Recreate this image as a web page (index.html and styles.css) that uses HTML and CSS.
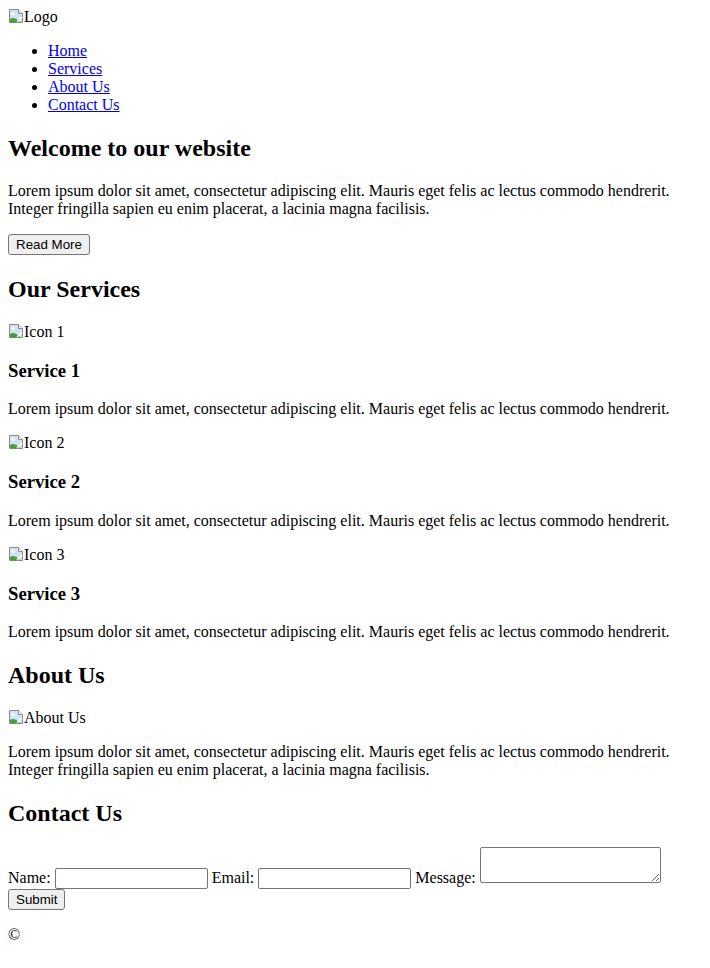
FILE: index.html
```html
<!DOCTYPE html>
<html lang="en">
<head>
<meta charset="utf-8">
<title>Website</title>
<link rel="stylesheet" href="styles.css">
</head>
<body>
<header class="site-header">
  <span class="broken-img"><svg class="broken-icon" width="16" height="16" viewBox="0 0 16 16"><path d="M1.5 1.5h9l4 4v9h-13z" fill="#cfe3f5" stroke="#8a8a8a"/><path d="M10.5 1.5v4h4" fill="#fff" stroke="#8a8a8a"/><path d="M2 14.5 L2 11 Q6 8 11 13 L12.5 14.5 Z" fill="#4a9c3a"/><circle cx="5" cy="5.5" r="1.6" fill="#fff"/><path d="M9 14 L14 9" stroke="#fff" stroke-width="1.5"/></svg>Logo</span>
  <nav class="main-nav">
    <ul class="nav-list">
      <li><a href="#">Home</a></li>
      <li><a href="#">Services</a></li>
      <li><a href="#">About Us</a></li>
      <li><a href="#">Contact Us</a></li>
    </ul>
  </nav>
</header>
<section class="hero">
  <h1 class="title">Welcome to our website</h1>
  <p class="text">Lorem ipsum dolor sit amet, consectetur adipiscing elit. Mauris eget felis ac lectus commodo hendrerit. Integer fringilla sapien eu enim placerat, a lacinia magna facilisis.</p>
  <button class="btn">Read More</button>
</section>
<section class="services">
  <h2 class="heading">Our Services</h2>
  <div class="service">
    <span class="broken-img"><svg class="broken-icon" width="16" height="16" viewBox="0 0 16 16"><path d="M1.5 1.5h9l4 4v9h-13z" fill="#cfe3f5" stroke="#8a8a8a"/><path d="M10.5 1.5v4h4" fill="#fff" stroke="#8a8a8a"/><path d="M2 14.5 L2 11 Q6 8 11 13 L12.5 14.5 Z" fill="#4a9c3a"/><circle cx="5" cy="5.5" r="1.6" fill="#fff"/><path d="M9 14 L14 9" stroke="#fff" stroke-width="1.5"/></svg>Icon 1</span>
    <h3 class="sub">Service 1</h3>
    <p class="text">Lorem ipsum dolor sit amet, consectetur adipiscing elit. Mauris eget felis ac lectus commodo hendrerit.</p>
  </div>
  <div class="service">
    <span class="broken-img"><svg class="broken-icon" width="16" height="16" viewBox="0 0 16 16"><path d="M1.5 1.5h9l4 4v9h-13z" fill="#cfe3f5" stroke="#8a8a8a"/><path d="M10.5 1.5v4h4" fill="#fff" stroke="#8a8a8a"/><path d="M2 14.5 L2 11 Q6 8 11 13 L12.5 14.5 Z" fill="#4a9c3a"/><circle cx="5" cy="5.5" r="1.6" fill="#fff"/><path d="M9 14 L14 9" stroke="#fff" stroke-width="1.5"/></svg>Icon 2</span>
    <h3 class="sub">Service 2</h3>
    <p class="text">Lorem ipsum dolor sit amet, consectetur adipiscing elit. Mauris eget felis ac lectus commodo hendrerit.</p>
  </div>
  <div class="service">
    <span class="broken-img"><svg class="broken-icon" width="16" height="16" viewBox="0 0 16 16"><path d="M1.5 1.5h9l4 4v9h-13z" fill="#cfe3f5" stroke="#8a8a8a"/><path d="M10.5 1.5v4h4" fill="#fff" stroke="#8a8a8a"/><path d="M2 14.5 L2 11 Q6 8 11 13 L12.5 14.5 Z" fill="#4a9c3a"/><circle cx="5" cy="5.5" r="1.6" fill="#fff"/><path d="M9 14 L14 9" stroke="#fff" stroke-width="1.5"/></svg>Icon 3</span>
    <h3 class="sub">Service 3</h3>
    <p class="text">Lorem ipsum dolor sit amet, consectetur adipiscing elit. Mauris eget felis ac lectus commodo hendrerit.</p>
  </div>
</section>
<section class="about">
  <h2 class="heading">About Us</h2>
  <span class="broken-img"><svg class="broken-icon" width="16" height="16" viewBox="0 0 16 16"><path d="M1.5 1.5h9l4 4v9h-13z" fill="#cfe3f5" stroke="#8a8a8a"/><path d="M10.5 1.5v4h4" fill="#fff" stroke="#8a8a8a"/><path d="M2 14.5 L2 11 Q6 8 11 13 L12.5 14.5 Z" fill="#4a9c3a"/><circle cx="5" cy="5.5" r="1.6" fill="#fff"/><path d="M9 14 L14 9" stroke="#fff" stroke-width="1.5"/></svg>About Us</span>
  <p class="text">Lorem ipsum dolor sit amet, consectetur adipiscing elit. Mauris eget felis ac lectus commodo hendrerit. Integer fringilla sapien eu enim placerat, a lacinia magna facilisis.</p>
</section>
<section class="contact">
  <h2 class="heading">Contact Us</h2>
  <form class="contact-form">
    <label for="name">Name:</label>
    <input class="field" type="text" id="name">
    <label for="email">Email:</label>
    <input class="field" type="email" id="email">
    <label for="message">Message:</label>
    <textarea class="area" id="message"></textarea>
    <button class="btn" type="submit">Submit</button>
  </form>
</section>
<footer class="site-footer">
  <p class="text">&copy;</p>
</footer>
</body>
</html>
```
FILE: styles.css
```css
html {
  background: #fff;
}
body {
  margin: 8px;
  font-family: "Liberation Serif", "Times New Roman", serif;
  font-size: 16px;
  color: #000;
}
.broken-img {
  display: inline-block;
  line-height: 18px;
}
.broken-icon {
  vertical-align: -2px;
}
.nav-list {
  margin: 16px 0;
  padding-left: 40px;
}
.nav-list a {
  color: #0000ee;
}
.title {
  font-size: 1.5em;
  margin: 21px 0 20px;
}
.heading {
  font-size: 1.5em;
  margin: 21px 0 20px;
}
.sub {
  font-size: 1.17em;
  margin: 1em 0;
}
.text {
  margin: 16px 0;
}
.btn {
  font-family: "Liberation Sans", Arial, sans-serif;
  font-size: 13.333px;
  line-height: 16px;
  padding: 2px 7px 1px;
  border: 1px solid #767676;
  border-radius: 3px;
  background: #efefef;
  color: #000;
}
.contact-form {
  margin: 0;
}
.field {
  font-family: "Liberation Sans", Arial, sans-serif;
  font-size: 13.333px;
  width: 147px;
  height: 17px;
  padding: 1px 2px;
  border: 1px solid #767676;
  border-radius: 2px;
}
.area {
  font-family: "Liberation Mono", monospace;
  font-size: 13.333px;
  width: 175px;
  height: 30px;
  padding: 2px;
  border: 1px solid #767676;
  border-radius: 2px;
}
```
